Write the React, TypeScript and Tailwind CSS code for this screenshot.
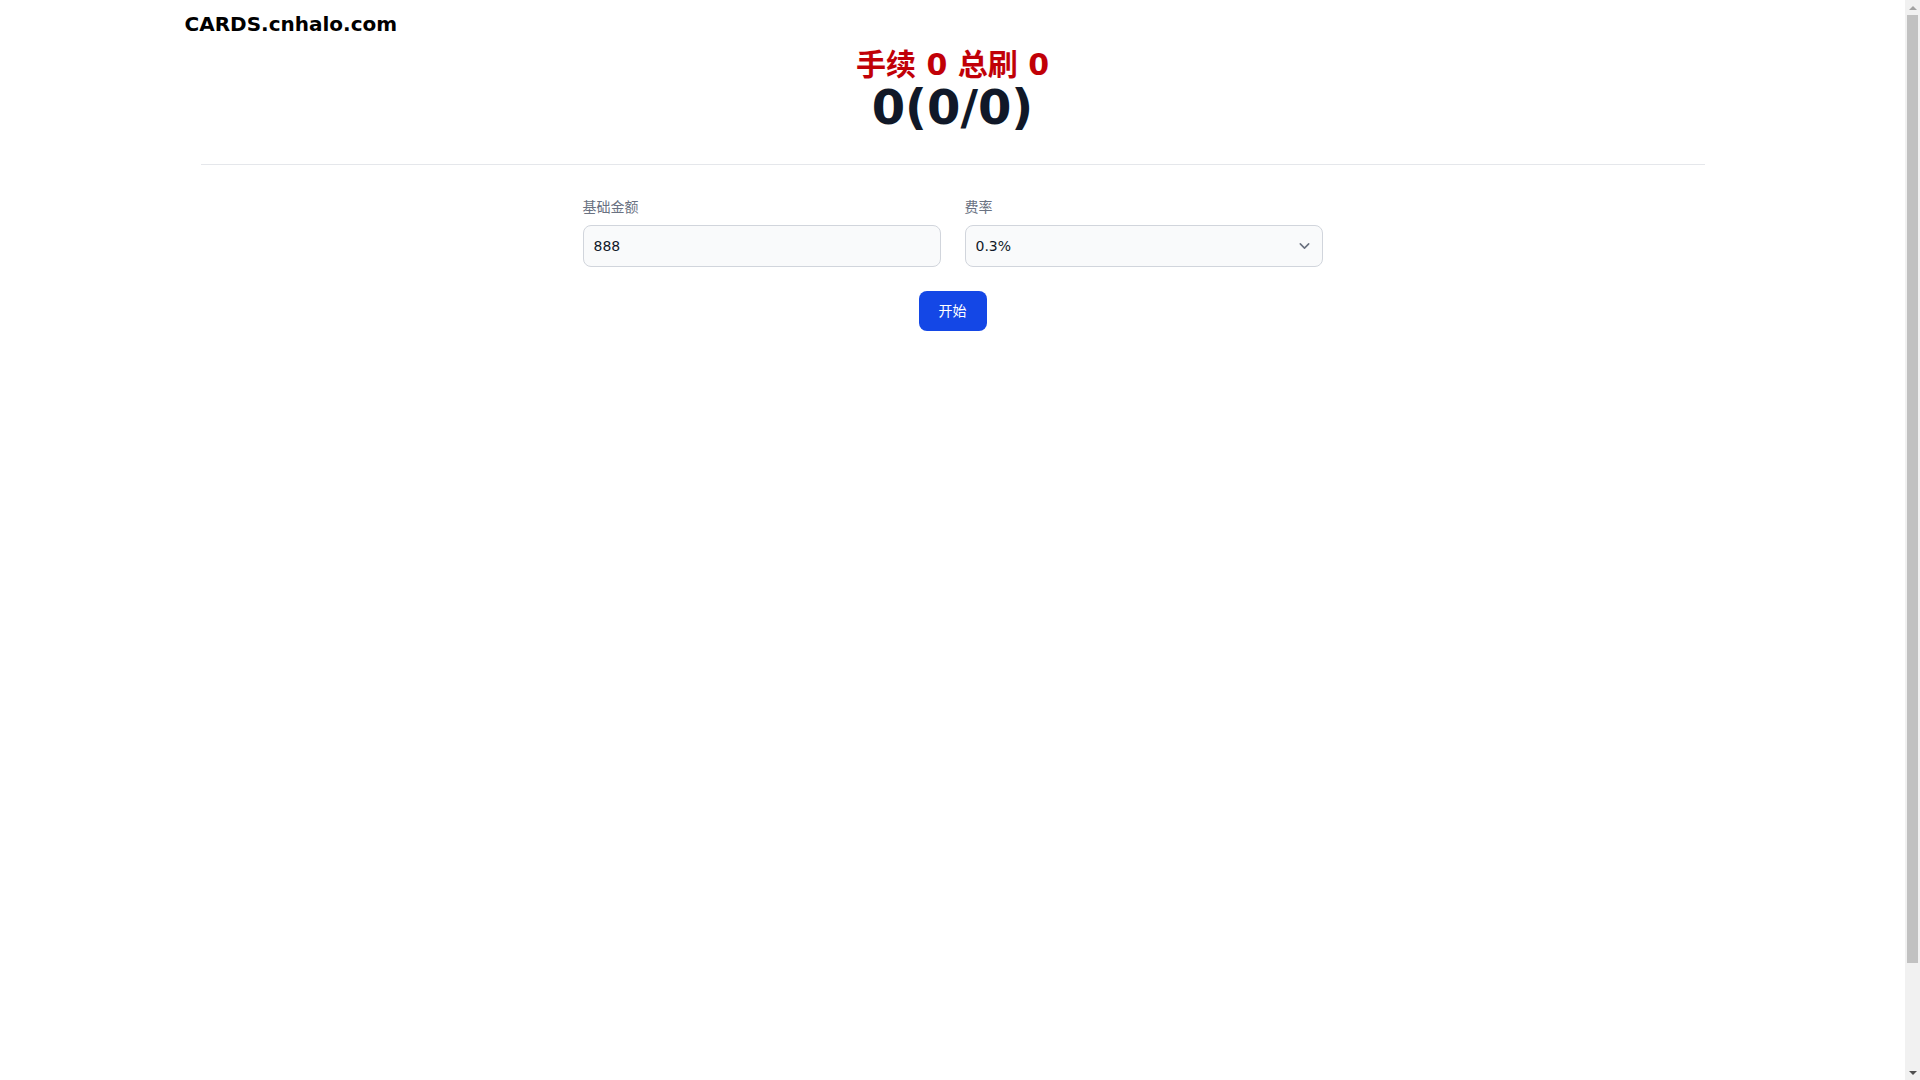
import * as React from 'react';

const rates = ['0.3%', '0.38%', '0.5%', '0.6%'];

// the reference shows a classic 15px browser scrollbar; keep the page width at 1905px
function ScrollBar() {
  return (
    <div className="fixed top-0 right-0 flex h-screen w-[15px] flex-col items-center bg-[#f1f1f1]">
      <div className="flex h-[15px] w-full items-center justify-center">
        <div className="h-0 w-0 border-x-[4px] border-b-[4px] border-x-transparent border-b-[#a3a3a3]" />
      </div>
      <div className="h-[948px] w-[11px] bg-[#c1c1c1]" />
      <div className="flex-1" />
      <div className="flex h-[15px] w-full items-center justify-center">
        <div className="h-0 w-0 border-x-[4px] border-t-[4px] border-x-transparent border-t-[#505050]" />
      </div>
    </div>
  );
}

export default function App() {
  const [amount, setAmount] = React.useState('888');
  const [rate, setRate] = React.useState('0.3%');

  return (
    <div className="min-h-[1196px] bg-white pr-[15px] font-['DejaVu_Sans','Noto_Sans_CJK_SC',sans-serif]">
      <header className="container mx-auto pt-[10px]">
        <h1 className="text-xl font-bold text-black">CARDS.cnhalo.com</h1>
      </header>

      <main className="container mx-auto px-4">
        <div className="mt-[9px] text-center">
          <div className="text-3xl font-bold text-red-700">手续 0 总刷 0</div>
          <div className="text-5xl leading-none font-bold text-gray-900">0(0/0)</div>
        </div>

        <hr className="mt-[33px] border-gray-200" />

        <div className="mx-auto mt-8 w-[740px]">
          <div className="grid grid-cols-2 gap-6">
            <div>
              <label htmlFor="amount" className="mb-2 block text-sm text-gray-500">
                基础金额
              </label>
              <input
                id="amount"
                value={amount}
                onChange={(e) => setAmount(e.target.value)}
                className="block w-full rounded-lg border border-gray-300 bg-gray-50 p-2.5 text-sm text-gray-900 outline-none"
              />
            </div>
            <div>
              <label htmlFor="rate" className="mb-2 block text-sm text-gray-500">
                费率
              </label>
              <div className="relative">
                <select
                  id="rate"
                  value={rate}
                  onChange={(e) => setRate(e.target.value)}
                  className="block w-full appearance-none rounded-lg border border-gray-300 bg-gray-50 p-2.5 text-sm text-gray-900 outline-none"
                >
                  {rates.map((r) => (
                    <option key={r} value={r}>
                      {r}
                    </option>
                  ))}
                </select>
                <svg
                  className="pointer-events-none absolute top-1/2 right-2 size-[21px] -translate-y-1/2"
                  viewBox="0 0 20 20"
                  fill="none"
                >
                  <path d="m6 8 4 4 4-4" stroke="#6b7280" strokeWidth="1.5" strokeLinecap="round" strokeLinejoin="round" />
                </svg>
              </div>
            </div>
          </div>

          <div className="mt-6 flex justify-center">
            <button className="rounded-lg bg-blue-700 px-5 py-2.5 text-sm font-normal text-white">开始</button>
          </div>
        </div>
      </main>

      <ScrollBar />
    </div>
  );
}
